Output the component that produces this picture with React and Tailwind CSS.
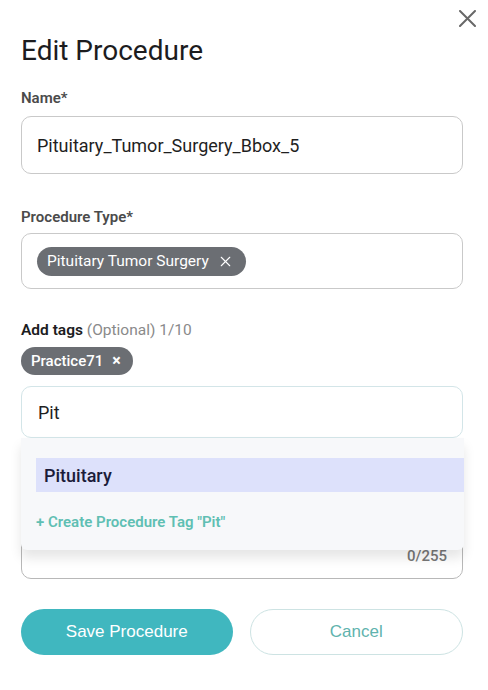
import { X } from 'lucide-react'

function Chip({ label, bold }) {
  return (
    <span
      className={
        bold
          ? 'inline-flex items-center gap-[9px] h-[28px] pl-[10px] pr-[12px] rounded-full bg-[#6b6e73] text-white text-[15px] font-medium'
          : 'inline-flex items-center gap-[8px] h-[29px] pl-[10px] pr-[12px] rounded-full bg-[#6b6e73] text-white text-[15.5px]'
      }
    >
      {label}
      {bold ? (
        <span className="text-[16px] font-bold leading-none">×</span>
      ) : (
        <X size={17} strokeWidth={1.5} />
      )}
    </span>
  )
}

export default function App() {
  return (
    <div className="relative w-[488px] h-[690px] bg-white font-['Roboto','Liberation_Sans',sans-serif] pl-[21px] pr-[25px]">
      <button className="absolute top-[10px] right-[12px]">
        <svg width="17" height="17" viewBox="0 0 17 17" fill="none" stroke="#686868" strokeWidth="2" strokeLinecap="round">
          <path d="M1 1L16 16M16 1L1 16" />
        </svg>
      </button>

      <h2 className="pt-[35px] text-[28px] leading-[32px] text-[#1c1c1e]">Edit Procedure</h2>

      <div className="mt-[21px] text-[15px] leading-[20px] font-semibold text-[#4b4b4b]">Name*</div>
      <div className="mt-[8px] h-[58px] flex items-center px-[15px] rounded-[10px] border border-[#c9c9c9] text-[18px] text-[#1f1f1f]">
        Pituitary_Tumor_Surgery_Bbox_5
      </div>

      <div className="mt-[33px] text-[15px] leading-[20px] font-semibold text-[#4b4b4b]">Procedure Type*</div>
      <div className="mt-[6px] h-[56px] flex items-start pt-[13px] px-[15px] rounded-[10px] border border-[#c9c9c9]">
        <Chip label="Pituitary Tumor Surgery" />
      </div>

      <div className="mt-[31px] text-[15.5px] leading-[20px]">
        <span className="font-semibold text-[#1c1c1e]">Add tags</span>{' '}
        <span className="text-[#8a8a8a]">(Optional) 1/10</span>
      </div>
      <div className="mt-[7px] flex">
        <Chip label="Practice71" bold />
      </div>

      <div className="relative mt-[11px]">
        <div className="h-[52px] flex items-center px-[16px] rounded-[10px] border border-[#d3e5e8] bg-white text-[18px] text-[#1f1f1f]">
          Pit
        </div>

        <div className="absolute left-0 right-[-1px] top-[52px] z-10 h-[112px] bg-[#f7f8fa] shadow-[0_8px_12px_rgba(0,0,0,0.1)] rounded-b-[6px] pt-[20px] pl-[15px]">
          <div className="h-[34px] flex items-center pl-[8px] bg-[#dde1fb] text-[18px] font-medium text-[#1b1c3a]">
            Pituitary
          </div>
          <div className="mt-[20px] text-[15px] leading-[20px] font-semibold text-[#5fbfb3]">+ Create Procedure Tag "Pit"</div>
        </div>

        <div className="mt-[16px] h-[125px] flex items-end justify-end pr-[15px] pb-[12px] rounded-[10px] border border-[#b8b8b8] text-[15px] leading-[20px] font-medium text-[#777]">
          0/255
        </div>
      </div>

      <div className="mt-[30px] flex gap-[17px] font-['Liberation_Sans','Arial',sans-serif]">
        <button className="flex-1 h-[46px] rounded-full bg-[#40b7bf] text-white text-[17px]">Save Procedure</button>
        <button className="flex-1 h-[46px] rounded-full border border-[#cde3e3] bg-white text-[#5fb3ae] text-[17px]">
          Cancel
        </button>
      </div>
    </div>
  )
}
